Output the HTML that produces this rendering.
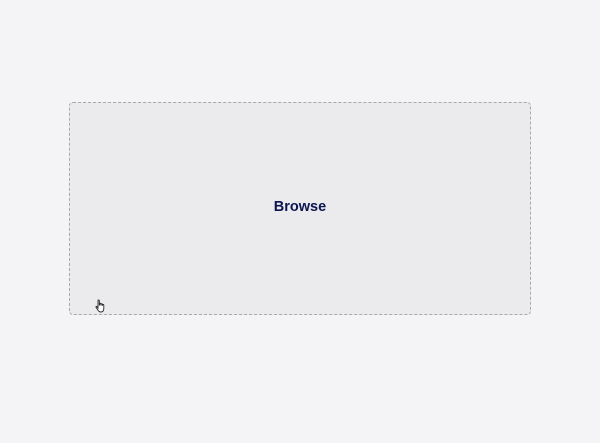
<!DOCTYPE html>
<html><head><style>
html,body{margin:0;padding:0;width:600px;height:443px;background:#f4f3f6;overflow:hidden}
.box{position:absolute;left:69px;top:102px;width:460px;height:211px;background:#ebeaed;border:1px dashed #a9a8ad;border-radius:4px}
.t{position:absolute;left:0;right:0;top:96px;text-align:center;font-family:"Liberation Sans",sans-serif;font-weight:bold;font-size:14.5px;color:#0d1550}
svg{position:absolute;left:95px;top:299px}
</style></head><body>
<div class="box"><div class="t">Browse</div></div>
<svg width="12" height="14" viewBox="0 0 12 14"><path d="M3 1.5c0-.8 1.3-.8 1.3 0V6h.2V4.8c0-.8 1.3-.8 1.3 0V6h.2V5.3c0-.8 1.3-.8 1.3 0V6.3h.2V6c0-.8 1.3-.8 1.3 0v3.5c0 2-1 3.5-3 3.5H5.5C4 13 3.5 12 2.5 10.5L1 8.3c-.4-.7.5-1.3 1-.7L3 9V1.5z" fill="#fff" stroke="#222" stroke-width=".9"/></svg>
</body></html>
